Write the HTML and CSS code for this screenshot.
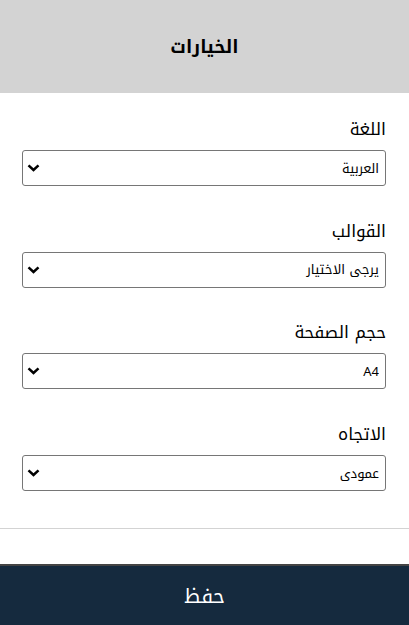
FILE: index.html
```html
<!DOCTYPE html>
<html lang="ar" dir="rtl">
<head>
<meta charset="utf-8">
<title>الخيارات</title>
<link rel="stylesheet" href="styles.css">
</head>
<body>
<div class="page">
  <header class="header"><h1 class="title">الخيارات</h1></header>
  <main class="form">
    <div class="field">
      <label class="label" for="lang">اللغة</label>
      <div class="select-wrap">
        <select id="lang" class="select"><option>العربية</option></select>
        <svg class="chevron" width="13" height="8" viewBox="0 0 13 8"><path d="M1.5 1.3 L6.5 6 L11.5 1.3" fill="none" stroke="#000" stroke-width="2.5"/></svg>
      </div>
    </div>
    <div class="field">
      <label class="label" for="tpl">القوالب</label>
      <div class="select-wrap">
        <select id="tpl" class="select"><option>يرجى الاختيار</option></select>
        <svg class="chevron" width="13" height="8" viewBox="0 0 13 8"><path d="M1.5 1.3 L6.5 6 L11.5 1.3" fill="none" stroke="#000" stroke-width="2.5"/></svg>
      </div>
    </div>
    <div class="field">
      <label class="label" for="size">حجم الصفحة</label>
      <div class="select-wrap">
        <select id="size" class="select"><option>A4</option></select>
        <svg class="chevron" width="13" height="8" viewBox="0 0 13 8"><path d="M1.5 1.3 L6.5 6 L11.5 1.3" fill="none" stroke="#000" stroke-width="2.5"/></svg>
      </div>
    </div>
    <div class="field">
      <label class="label" for="dir">الاتجاه</label>
      <div class="select-wrap">
        <select id="dir" class="select"><option>عمودى</option></select>
        <svg class="chevron" width="13" height="8" viewBox="0 0 13 8"><path d="M1.5 1.3 L6.5 6 L11.5 1.3" fill="none" stroke="#000" stroke-width="2.5"/></svg>
      </div>
    </div>
  </main>
  <div class="divider"></div>
  <div class="spacer"></div>
  <footer class="footer"><button class="save">حفظ</button></footer>
</div>
</body>
</html>
```
FILE: styles.css
```css
html, body { margin: 0; padding: 0; }
body {
  font-family: "Noto Kufi Arabic", "DejaVu Sans", sans-serif;
  background: #fff;
  color: #000;
}
.page {
  display: flex;
  flex-direction: column;
  min-height: 625px;
}
.header {
  height: 93px;
  background: #d3d3d3;
  display: flex;
  align-items: center;
  justify-content: center;
}
.title {
  margin: 0;
  font-size: 18px;
  line-height: 30px;
  font-weight: bold;
}
.form {
  padding: 21px 23px 0 22px;
  display: flex;
  flex-direction: column;
  gap: 29.7px;
}
.field {
  display: flex;
  flex-direction: column;
  gap: 6px;
}
.label {
  font-size: 17px;
  line-height: 30px;
  height: 30px;
}
.select-wrap {
  position: relative;
  display: flex;
}
.select {
  flex: 1;
  height: 36px;
  font-size: 13px;
  font-family: inherit;
  direction: rtl;
  border: 1px solid #767676;
  border-radius: 3px;
  background: #fff;
  color: #000;
  padding: 0 6px 0 30px;
  appearance: none;
  -webkit-appearance: none;
}
.chevron {
  position: absolute;
  left: 5px;
  top: 14px;
  pointer-events: none;
}
.divider {
  margin-top: 37px;
  height: 1px;
  background: #d3d3d3;
}
.spacer { flex: 1; }
.footer {
  height: 59px;
  background: #152a3e;
  border-top: 2px solid #444;
  display: flex;
}
.save {
  flex: 1;
  background: transparent;
  border: 0;
  color: #fff;
  font-family: inherit;
  font-size: 20px;
}
```
